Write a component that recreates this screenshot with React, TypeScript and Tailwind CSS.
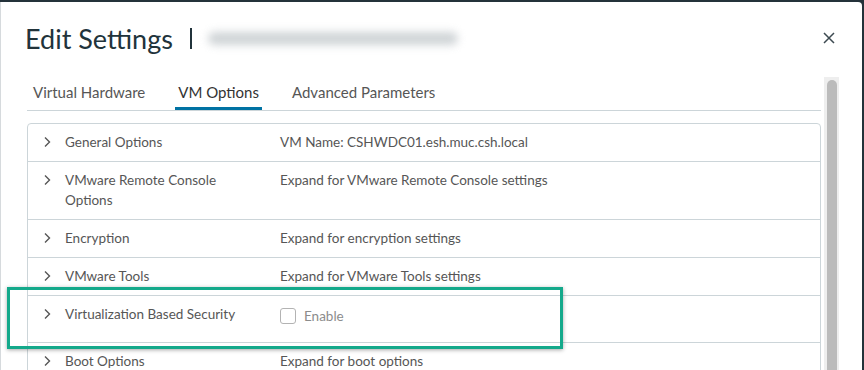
import React from 'react';

const rows: { label: string[]; value: string; checkbox?: boolean }[] = [
  { label: ['General Options'], value: 'VM Name: CSHWDC01.esh.muc.csh.local' },
  { label: ['VMware Remote Console', 'Options'], value: 'Expand for VMware Remote Console settings' },
  { label: ['Encryption'], value: 'Expand for encryption settings' },
  { label: ['VMware Tools'], value: 'Expand for VMware Tools settings' },
  { label: ['Virtualization Based Security'], value: 'Enable', checkbox: true },
  { label: ['Boot Options'], value: 'Expand for boot options' },
];

const Chevron = () => (
  <svg width="10" height="12" viewBox="0 0 10 12" className="shrink-0">
    <path d="M3 1.5 L7.5 6 L3 10.5" fill="none" stroke="#565656" strokeWidth="1.4" />
  </svg>
);

const App: React.FC = () => {
  return (
    <div className="w-[864px] h-[370px] overflow-hidden bg-[#24323a] pt-[2px]" style={{ fontFamily: 'Lato, "Noto Sans", sans-serif' }}>
      <div className="relative w-[862px] h-[368px] bg-white rounded-tr-[4px] border-l border-[#d6dadd] overflow-hidden">
        {/* header */}
        <div className="flex items-center h-[70px] pl-[24px] pr-[26px] pt-[2px]">
          <h1 className="text-[27px] text-[#21333b] leading-none">Edit Settings</h1>
          <div className="w-[2px] h-[21px] bg-[#21333b] ml-[17px] mr-[16px]" />
          <div className="w-[250px] h-[13px] rounded-full bg-[#c3c9cc] blur-[4px] opacity-80" />
          <div className="flex-1" />
          <svg width="14" height="14" viewBox="0 0 14 14">
            <path d="M2 2 L12 12 M12 2 L2 12" stroke="#3d4a51" strokeWidth="1.5" />
          </svg>
        </div>

        <div className="flex">
          <div className="w-[794px] ml-[26px]">
            {/* tabs */}
            <div className="flex items-end h-[39px] border-b border-[#ccd5d9] pl-[6px] text-[15px] text-[#565656]">
              <div className="pb-[7px] mr-[30px]">Virtual Hardware</div>
              <div className="pb-[4px] border-b-[3px] border-[#0072a3] px-[3px] mr-[30px] text-[#333]">VM Options</div>
              <div className="pb-[7px]">Advanced Parameters</div>
            </div>

            {/* table */}
            <div className="mt-[12px] border border-[#ccd5d9] rounded-t-[4px] text-[13.5px] text-[#565656]">
              {rows.map((r, i) => (
                <div
                  key={i}
                  className={`flex border-[#ccd5d9] ${i > 0 ? 'border-t' : ''} ${r.checkbox ? 'h-[47px]' : ''}`}
                >
                  <div className="w-[252px] flex pl-[14px] pt-[8px] pb-[9px] gap-[13px]">
                    <div className="h-[20px] flex items-center"><Chevron /></div>
                    <div className="leading-[20px]">
                      {r.label.map((l, j) => (
                        <div key={j}>{l}</div>
                      ))}
                    </div>
                  </div>
                  <div className="flex-1 pt-[8px] leading-[20px]">
                    {r.checkbox ? (
                      <div className="flex items-center gap-[8px] pt-[2px]">
                        <div className="w-[16px] h-[16px] border border-[#b3b3b3] rounded-[3px]" />
                        <span className="text-[#8c8c8c]">{r.value}</span>
                      </div>
                    ) : (
                      r.value
                    )}
                  </div>
                </div>
              ))}
            </div>
          </div>

          {/* scrollbar */}
          <div className="ml-[3px] mt-[5px] w-[15px] h-[300px] bg-[#eeeeee] pt-[3px] flex justify-center">
            <div className="w-[10px] h-full bg-[#bbbbbb] rounded-t-full" />
          </div>
        </div>

        {/* highlight */}
        <div className="absolute left-[6px] top-[285px] w-[556px] h-[62px] border-[3px] border-[#14a98b] shadow-[0_1px_4px_rgba(0,0,0,0.35)] pointer-events-none" />
      </div>
    </div>
  );
};

export default App;
